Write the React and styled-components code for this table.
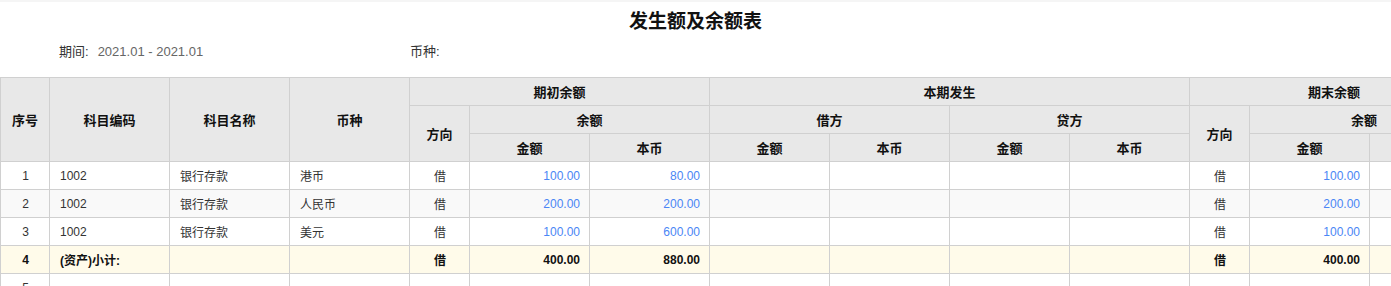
import React from 'react';
import styled, { createGlobalStyle } from 'styled-components';

const COL_WIDTHS = [49, 120, 120, 120, 60, 120, 120, 120, 120, 120, 120, 60, 120, 109];

const rows = [
  { no: 1, code: '1002', name: '银行存款', cur: '港币', dir: '借', amt: '100.00', base: '80.00', endDir: '借', endAmt: '100.00' },
  { no: 2, code: '1002', name: '银行存款', cur: '人民币', dir: '借', amt: '200.00', base: '200.00', endDir: '借', endAmt: '200.00' },
  { no: 3, code: '1002', name: '银行存款', cur: '美元', dir: '借', amt: '100.00', base: '600.00', endDir: '借', endAmt: '100.00' },
  { no: 4, code: '(资产)小计:', name: '', cur: '', dir: '借', amt: '400.00', base: '880.00', endDir: '借', endAmt: '400.00', total: true },
  { no: 5, code: '', name: '', cur: '', dir: '', amt: '', base: '', endDir: '', endAmt: '' },
];

const GlobalStyle = createGlobalStyle`
  body {
    margin: 0;
    background: #fff;
    font-family: "Liberation Sans", "Noto Sans CJK SC", sans-serif;
    color: #333;
  }
`;

const BodyRow = ({ row, index }) => (
  <S.Row $striped={index % 2 === 1} $total={row.total}>
    <S.Cell $align="center">{row.no}</S.Cell>
    <S.Cell>{row.code}</S.Cell>
    <S.Cell>{row.name}</S.Cell>
    <S.Cell>{row.cur}</S.Cell>
    <S.Cell $align="center">{row.dir}</S.Cell>
    <S.Cell $align="right" $num={!row.total}>{row.amt}</S.Cell>
    <S.Cell $align="right" $num={!row.total}>{row.base}</S.Cell>
    <S.Cell />
    <S.Cell />
    <S.Cell />
    <S.Cell />
    <S.Cell $align="center">{row.endDir}</S.Cell>
    <S.Cell $align="right" $num={!row.total}>{row.endAmt}</S.Cell>
    <S.Cell />
  </S.Row>
);

const App = () => (
  <S.Page>
    <GlobalStyle />
    <S.TopBar />
    <S.Title>发生额及余额表</S.Title>
    <S.Meta>
      <S.MetaItem $width={351}>
        <S.Label>期间:</S.Label>
        <S.Value>2021.01 - 2021.01</S.Value>
      </S.MetaItem>
      <S.MetaItem>
        <S.Label>币种:</S.Label>
      </S.MetaItem>
    </S.Meta>
    <S.TableWrap>
      <S.Table>
        <colgroup>
          {COL_WIDTHS.map((w, i) => (
            <col key={i} style={{ width: w }} />
          ))}
        </colgroup>
        <thead>
          <tr>
            <S.Head rowSpan={3}>序号</S.Head>
            <S.Head rowSpan={3}>科目编码</S.Head>
            <S.Head rowSpan={3}>科目名称</S.Head>
            <S.Head rowSpan={3}>币种</S.Head>
            <S.Head colSpan={3}>期初余额</S.Head>
            <S.Head colSpan={4}>本期发生</S.Head>
            <S.Head colSpan={3}>期末余额</S.Head>
          </tr>
          <tr>
            <S.Head rowSpan={2}>方向</S.Head>
            <S.Head colSpan={2}>余额</S.Head>
            <S.Head colSpan={2}>借方</S.Head>
            <S.Head colSpan={2}>贷方</S.Head>
            <S.Head rowSpan={2}>方向</S.Head>
            <S.Head colSpan={2}>余额</S.Head>
          </tr>
          <tr>
            <S.Head>金额</S.Head>
            <S.Head>本币</S.Head>
            <S.Head>金额</S.Head>
            <S.Head>本币</S.Head>
            <S.Head>金额</S.Head>
            <S.Head>本币</S.Head>
            <S.Head>金额</S.Head>
            <S.Head>本币</S.Head>
          </tr>
        </thead>
        <tbody>
          {rows.map((row, index) => (
            <BodyRow key={row.no} row={row} index={index} />
          ))}
        </tbody>
      </S.Table>
    </S.TableWrap>
  </S.Page>
);

export default App;

const S = {
  Page: styled.div`
    width: 100%;
    height: 286px;
    overflow: hidden;
  `,
  TopBar: styled.div`
    height: 2px;
    background: #f5f5f5;
  `,
  Title: styled.h1`
    margin: 0;
    padding-top: 8px;
    height: 24px;
    line-height: 24px;
    text-align: center;
    font-size: 19px;
    font-weight: bold;
    color: #111;
  `,
  Meta: styled.div`
    display: flex;
    align-items: center;
    height: 16px;
    margin-top: 10px;
    padding-left: 59px;
    font-size: 13px;
    line-height: 16px;
  `,
  MetaItem: styled.div`
    display: flex;
    gap: 9px;
    width: ${({ $width }) => ($width ? `${$width}px` : 'auto')};
  `,
  Label: styled.span`
    color: #333;
  `,
  Value: styled.span`
    color: #666;
  `,
  TableWrap: styled.div`
    margin-top: 17px;
    width: 100%;
    overflow: hidden;
  `,
  Table: styled.table`
    border-collapse: collapse;
    table-layout: fixed;
    width: 1478px;
    font-size: 12px;
  `,
  Head: styled.th`
    height: 27px;
    padding: 0;
    background: #e8e8e8;
    border: 1px solid #d0d0d0;
    font-size: 13px;
    font-weight: bold;
    color: #111;
    text-align: center;
    vertical-align: middle;
  `,
  Row: styled.tr`
    background: ${({ $total, $striped }) => ($total ? '#fffbea' : $striped ? '#f9f9f9' : '#fff')};
    font-weight: ${({ $total }) => ($total ? 'bold' : 'normal')};
    color: ${({ $total }) => ($total ? '#111' : '#333')};
  `,
  Cell: styled.td`
    height: 27px;
    padding: 0 9px 0 10px;
    border: 1px solid #d0d0d0;
    text-align: ${({ $align }) => $align || 'left'};
    color: ${({ $num }) => ($num ? '#4a86f5' : 'inherit')};
    white-space: nowrap;
    overflow: hidden;
  `,
};
